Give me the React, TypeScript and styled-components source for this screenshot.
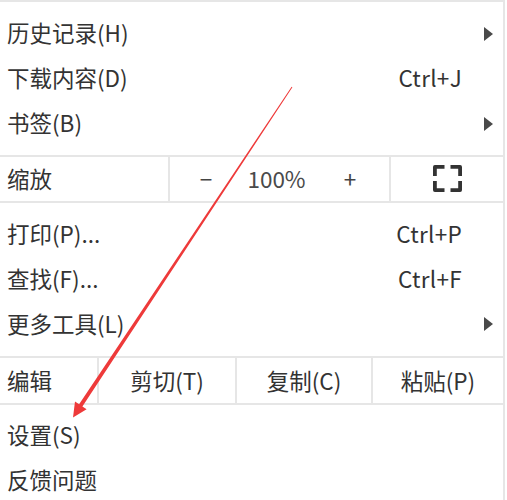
import React from "react";
import styled, { createGlobalStyle } from "styled-components";

const Global = createGlobalStyle`
  html, body { margin: 0; padding: 0; background: #ffffff; }
  body { font-family: "Noto Sans CJK SC", "Noto Sans", sans-serif; }
`;

const Page = styled.div`
  position: relative;
  width: 507px;
  height: 500px;
  overflow: hidden;
  background: #fff;
`;

const Menu = styled.div`
  width: 505px;
  box-sizing: border-box;
  border-top: 2px solid #e6e6e6;
  border-right: 2px solid #e6e6e6;
  color: #333;
  font-size: 22.5px;
  line-height: 1;
`;

const Section = styled.div<{ $top?: number; $bottom?: number }>`
  padding-top: ${(p) => p.$top ?? 9}px;
  padding-bottom: ${(p) => p.$bottom ?? 9}px;
`;

const Item = styled.div`
  display: grid;
  grid-template-columns: 1fr auto 41px;
  align-items: center;
  height: 45px;
  box-sizing: border-box;
  padding-left: 7px;
  padding-bottom: 3px;
`;

const Label = styled.span`
  white-space: nowrap;
`;

const Shortcut = styled.span`
  white-space: nowrap;
  letter-spacing: 0.3px;
`;

const SubArrow = styled.span`
  justify-self: end;
  margin-right: 10px;
  margin-top: 2px;
  width: 0;
  height: 0;
  border-top: 7px solid transparent;
  border-bottom: 7px solid transparent;
  border-left: 9px solid #4a4a4a;
`;

const ZoomRow = styled.div`
  display: grid;
  grid-template-columns: 168px 221px 1fr;
  height: 44px;
  border-top: 2px solid #e6e6e6;
  border-bottom: 2px solid #e6e6e6;
`;

const Cell = styled.div<{ $center?: boolean; $divider?: boolean }>`
  display: flex;
  align-items: center;
  justify-content: ${(p) => (p.$center ? "center" : "flex-start")};
  padding-left: ${(p) => (p.$center ? 0 : 7)}px;
  padding-bottom: 1px;
  border-left: ${(p) => (p.$divider ? "2px solid #e6e6e6" : "none")};
  white-space: nowrap;
`;

const ZoomControls = styled.div`
  display: grid;
  grid-template-columns: 72px 1fr 78px;
  align-items: center;
  border-left: 2px solid #e6e6e6;
  padding-bottom: 1px;
`;

const ZoomBtn = styled.span`
  text-align: center;
  color: #444;
`;

const ZoomValue = styled.span`
  text-align: center;
  color: #4a4a4a;
`;

const EditRow = styled.div`
  display: grid;
  grid-template-columns: 97px 138px 136px 1fr;
  height: 45px;
  border-top: 2px solid #e6e6e6;
  border-bottom: 2px solid #e6e6e6;
`;

const Overlay = styled.svg`
  position: absolute;
  left: 0;
  top: 0;
  pointer-events: none;
`;

const FullscreenIcon = () => (
  <svg width="29" height="27" viewBox="0 0 29 27">
    <g fill="none" stroke="#333" strokeWidth="3.8" strokeLinejoin="round">
      <path d="M1.9 11 V1.9 H11.5" />
      <path d="M17.5 1.9 H27.1 V11" />
      <path d="M27.1 16 V25.1 H17.5" />
      <path d="M11.5 25.1 H1.9 V16" />
    </g>
  </svg>
);

type Entry = { label: string; shortcut?: string; sub?: boolean };

const MenuItem = ({ label, shortcut, sub }: Entry) => (
  <Item>
    <Label>{label}</Label>
    <Shortcut>{shortcut ?? ""}</Shortcut>
    {sub ? <SubArrow /> : <span />}
  </Item>
);

const first: Entry[] = [
  { label: "历史记录(H)", sub: true },
  { label: "下载内容(D)", shortcut: "Ctrl+J" },
  { label: "书签(B)", sub: true },
];

const second: Entry[] = [
  { label: "打印(P)...", shortcut: "Ctrl+P" },
  { label: "查找(F)...", shortcut: "Ctrl+F" },
  { label: "更多工具(L)", sub: true },
];

const third: Entry[] = [{ label: "设置(S)" }, { label: "反馈问题" }];

export default function App() {
  return (
    <Page>
      <Global />
      <Menu>
        <Section $top={9.5} $bottom={8.5}>
          {first.map((e) => (
            <MenuItem key={e.label} {...e} />
          ))}
        </Section>
        <ZoomRow>
          <Cell>缩放</Cell>
          <ZoomControls>
            <ZoomBtn>−</ZoomBtn>
            <ZoomValue>100%</ZoomValue>
            <ZoomBtn>+</ZoomBtn>
          </ZoomControls>
          <Cell $center $divider>
            <FullscreenIcon />
          </Cell>
        </ZoomRow>
        <Section>
          {second.map((e) => (
            <MenuItem key={e.label} {...e} />
          ))}
        </Section>
        <EditRow>
          <Cell>编辑</Cell>
          <Cell $center $divider>剪切(T)</Cell>
          <Cell $center $divider>复制(C)</Cell>
          <Cell $center $divider>粘贴(P)</Cell>
        </EditRow>
        <Section $top={8}>
          {third.map((e) => (
            <MenuItem key={e.label} {...e} />
          ))}
        </Section>
      </Menu>
      <Overlay width="507" height="500" viewBox="0 0 507 500">
        <polygon
          fill="#ee3a3a"
          points="291.6,86.7 292.4,87.3 82.4,406.4 86.6,409.3 73,417.5 75.0,401.5 79.1,404.3"
        />
      </Overlay>
    </Page>
  );
}
